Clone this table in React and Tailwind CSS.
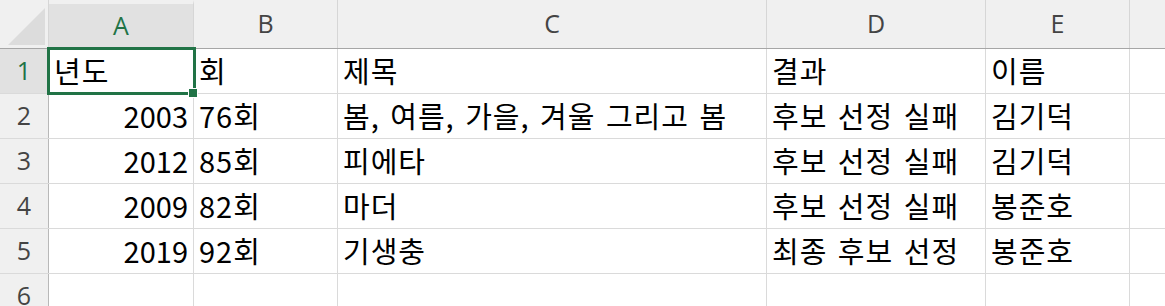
const cols = [
  { key: 'A', width: 'w-[145px]' },
  { key: 'B', width: 'w-[144px]' },
  { key: 'C', width: 'w-[429px]' },
  { key: 'D', width: 'w-[219px]' },
  { key: 'E', width: 'w-[144px]' },
];

const rows = [
  ['년도', '회', '제목', '결과', '이름'],
  [2003, '76회', '봄, 여름, 가을, 겨울 그리고 봄', '후보 선정 실패', '김기덕'],
  [2012, '85회', '피에타', '후보 선정 실패', '김기덕'],
  [2009, '82회', '마더', '후보 선정 실패', '봉준호'],
  [2019, '92회', '기생충', '최종 후보 선정', '봉준호'],
  ['', '', '', '', ''],
];

const headFont = "font-['Open_Sans','Noto_Sans',sans-serif]";
const cellFont = "font-['Noto_Sans_CJK_KR','Noto_Sans',sans-serif]";

function ColumnHeader({ col, selected }) {
  return (
    <div
      className={`${col.width} shrink-0 h-full flex items-center justify-center border-r border-[#d6d6d6] text-[25px] ${headFont} ${
        selected ? 'bg-[#e1e1e1] border-t-4 border-t-[#f0f0f0] text-[#217346]' : 'text-[#444]'
      }`}
    >
      {col.key}
    </div>
  );
}

function Row({ index, cells }) {
  const selected = index === 1;
  return (
    <div className="flex h-[45px] border-b border-[#dadada]">
      <div
        className={`w-[49px] shrink-0 flex items-center justify-center border-r border-[#b8b8b8] text-[25px] ${headFont} ${
          selected ? 'bg-[#e1e1e1] text-[#217346]' : 'bg-[#f0f0f0] text-[#444]'
        }`}
      >
        {index}
      </div>
      {cells.map((value, i) => {
        const isNum = typeof value === 'number';
        return (
          <div
            key={i}
            className={`${cols[i].width} shrink-0 flex items-center px-[5px] border-r border-[#dadada] text-[29px] text-black whitespace-nowrap ${cellFont} ${
              isNum ? 'justify-end' : 'justify-start tracking-[1px] [word-spacing:3px]'
            }`}
          >
            {value}
          </div>
        );
      })}
      <div className="flex-1" />
    </div>
  );
}

export default function App() {
  return (
    <div className="relative w-[1165px] h-[306px] overflow-hidden bg-white select-none">
      {/* column letters */}
      <div className="flex h-[49px] bg-[#f0f0f0] border-b border-[#a6a6a6]">
        <div className="w-[49px] shrink-0 h-full flex items-end justify-end pr-[3px] pb-[3px] border-r border-[#d6d6d6]">
          <svg width="37" height="37" viewBox="0 0 37 37">
            <polygon points="37,0 37,37 0,37" fill="#dcdcdc" />
          </svg>
        </div>
        {cols.map((col) => (
          <ColumnHeader key={col.key} col={col} selected={col.key === 'A'} />
        ))}
        <div className="flex-1" />
      </div>

      {rows.map((cells, i) => (
        <Row key={i} index={i + 1} cells={cells} />
      ))}

      {/* active cell A1 */}
      <div className="absolute left-[47px] top-[47px] w-[149px] h-[48px] border-[3px] border-[#217346] pointer-events-none" />
      <div className="absolute left-[188px] top-[88px] w-[10px] h-[10px] bg-[#217346] border border-white" />
    </div>
  );
}
